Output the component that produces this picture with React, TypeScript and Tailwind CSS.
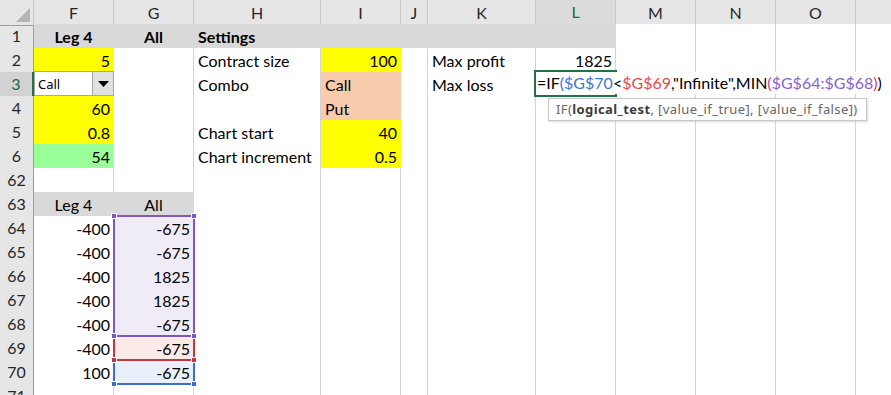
import React from "react";

type CellSpec = {
  v?: string;
  a?: "l" | "r" | "c";
  b?: boolean;
  f?: string;
  dd?: boolean;
};

type Row = { n: string; sel?: boolean; cells: Record<string, CellSpec> };

const YEL = "bg-[#ffff00] border-[#ffff00]";
const PEACH = "bg-[#f8cbad] border-[#f8cbad]";
const GRN = "bg-[#99ff99] border-[#99ff99]";
const GRY = "bg-[#d9d9d9] border-[#d9d9d9]";
const PUR = "bg-[#efebf7] border-[#d4d4d4]";
const RED = "bg-[#fbeaea] border-[#d4d4d4]";
const BLU = "bg-[#e9f0fa] border-[#d4d4d4]";

const COLS = ["F", "G", "H", "I", "J", "K", "L", "M", "N", "O", "P"];

const rows: Row[] = [
  {
    n: "1",
    cells: {
      F: { v: "Leg 4", a: "c", b: true, f: GRY },
      G: { v: "All", a: "c", b: true, f: GRY },
      H: { v: "Settings", b: true, f: GRY },
      I: { f: GRY },
      J: { f: GRY },
      K: { f: GRY },
      L: { f: GRY },
    },
  },
  {
    n: "2",
    cells: {
      F: { v: "5", a: "r", f: YEL },
      H: { v: "Contract size" },
      I: { v: "100", a: "r", f: YEL },
      K: { v: "Max profit" },
      L: { v: "1825", a: "r" },
    },
  },
  {
    n: "3",
    sel: true,
    cells: {
      F: { dd: true },
      H: { v: "Combo" },
      I: { v: "Call", f: PEACH },
      K: { v: "Max loss" },
    },
  },
  { n: "4", cells: { F: { v: "60", a: "r", f: YEL }, I: { v: "Put", f: PEACH } } },
  {
    n: "5",
    cells: {
      F: { v: "0.8", a: "r", f: YEL },
      H: { v: "Chart start" },
      I: { v: "40", a: "r", f: YEL },
    },
  },
  {
    n: "6",
    cells: {
      F: { v: "54", a: "r", f: GRN },
      H: { v: "Chart increment" },
      I: { v: "0.5", a: "r", f: YEL },
    },
  },
  { n: "62", cells: {} },
  {
    n: "63",
    cells: {
      F: { v: "Leg 4", a: "c", f: GRY },
      G: { v: "All", a: "c", f: GRY },
    },
  },
  { n: "64", cells: { F: { v: "-400", a: "r" }, G: { v: "-675", a: "r", f: PUR } } },
  { n: "65", cells: { F: { v: "-400", a: "r" }, G: { v: "-675", a: "r", f: PUR } } },
  { n: "66", cells: { F: { v: "-400", a: "r" }, G: { v: "1825", a: "r", f: PUR } } },
  { n: "67", cells: { F: { v: "-400", a: "r" }, G: { v: "1825", a: "r", f: PUR } } },
  { n: "68", cells: { F: { v: "-400", a: "r" }, G: { v: "-675", a: "r", f: PUR } } },
  { n: "69", cells: { F: { v: "-400", a: "r" }, G: { v: "-675", a: "r", f: RED } } },
  { n: "70", cells: { F: { v: "100", a: "r" }, G: { v: "-675", a: "r", f: BLU } } },
  { n: "71", cells: {} },
];

const GRID =
  "grid grid-cols-[34px_80px_80px_127px_80px_27px_108px_80px_80px_80px_80px_80px] h-6";

function Dropdown() {
  return (
    <div className="absolute -top-px left-0 -right-px bottom-0 flex border border-[#a6a6a6] bg-white">
      <div className="flex-1 flex items-center pl-[3px] text-[13px] text-black font-['Noto_Sans',sans-serif]">
        Call
      </div>
      <div className="w-[21px] flex items-center justify-center bg-[#e1e1e1] border-l border-[#a6a6a6]">
        <svg width="11" height="6" viewBox="0 0 11 6">
          <path d="M0 0h11L5.5 6z" fill="#000" />
        </svg>
      </div>
    </div>
  );
}

function Cell({ spec }: { spec?: CellSpec }) {
  const s = spec || {};
  const align =
    s.a === "r" ? "justify-end pr-[3px]" : s.a === "c" ? "justify-center" : "justify-start pl-[4px]";
  return (
    <div
      className={`relative flex items-end pb-[1px] border-r border-b whitespace-nowrap leading-[20px] text-[16px] text-black ${
        s.f ? s.f : "border-[#d4d4d4] bg-white"
      } ${align} ${s.b ? "font-bold" : ""}`}
    >
      {s.dd ? <Dropdown /> : s.v}
    </div>
  );
}

function Handle({ className }: { className: string }) {
  return <div className={`absolute w-[6px] h-[6px] border border-white ${className}`} />;
}

export default function App() {
  return (
    <div className="relative w-[891px] h-[395px] overflow-hidden bg-white font-['Lato',sans-serif]">
      {/* column headers */}
      <div className={GRID}>
        <div className="relative bg-[#e6e6e6] border-r border-b border-r-[#c8c8c8] border-b-[#9e9e9e]">
          <svg className="absolute right-[3px] bottom-[3px]" width="14" height="14" viewBox="0 0 14 14">
            <path d="M14 0V14H0z" fill="#b4b4b4" />
          </svg>
        </div>
        {COLS.map((c) => (
          <div
            key={c}
            className={`flex items-center justify-center text-[16px] border-r ${
              c === "L"
                ? "bg-[#dcdcdc] text-[#1d6b40] border-b-2 border-b-[#217346] border-r-[#c8c8c8]"
                : "bg-[#e6e6e6] text-[#262626] border-b border-b-[#9e9e9e] border-r-[#c8c8c8]"
            }`}
          >
            {c === "P" ? "" : c}
          </div>
        ))}
      </div>

      {rows.map((r) => (
        <div key={r.n} className={GRID}>
          <div
            className={`flex items-center justify-center text-[16px] border-b border-b-[#c8c8c8] ${
              r.sel
                ? "bg-[#d2d2d2] text-[#1d6b40] border-r-2 border-r-[#217346]"
                : "bg-[#e6e6e6] text-[#262626] border-r border-r-[#9e9e9e]"
            }`}
          >
            {r.n}
          </div>
          {COLS.map((c) => (
            <Cell key={c} spec={r.cells[c]} />
          ))}
        </div>
      ))}

      {/* active cell in edit mode */}
      <div className="absolute left-[534px] top-[70px] w-[83px] h-[27px] border-2 border-[#217346]" />
      <div className="absolute left-[537px] top-[72px] w-[354px] h-[22px] bg-white flex items-end pb-[1px] text-[16px] leading-[20px] whitespace-nowrap text-black">
        <span>=IF</span>
        <span className="text-[#3b78d4]">(</span>
        <span className="text-[#3b78d4]">$G$70</span>
        <span>&lt;</span>
        <span className="text-[#dd4b4b]">$G$69</span>
        <span>,"Infinite",MIN</span>
        <span className="text-[#cf3f78]">(</span>
        <span className="text-[#8a62cc]">$G$64:$G$68</span>
        <span className="text-[#cf3f78]">)</span>
        <span>)</span>
      </div>

      {/* function tooltip */}
      <div className="absolute left-[548px] top-[98px] w-[319px] h-[23px] bg-white border border-[#c6c6c6] shadow-[1px_1px_2px_rgba(0,0,0,0.15)] flex items-center pl-[7px] text-[13px] tracking-[0.4px] text-[#666666] whitespace-nowrap font-['Noto_Sans',sans-serif]">
        IF(<span className="font-bold text-[#3c3c3c]">logical_test</span>, [value_if_true], [value_if_false])
      </div>

      {/* range highlights */}
      <div className="absolute left-[113px] top-[215px] w-[82px] h-[122px] border-2 border-[#8057c2]" />
      <div className="absolute left-[113px] top-[335px] w-[82px] h-[26px] border-x-2 border-b-2 border-[#c0393f]" />
      <div className="absolute left-[113px] top-[359px] w-[82px] h-[26px] border-x-2 border-b-2 border-[#3a6fc6]" />
      <Handle className="left-[111px] top-[213px] bg-[#8057c2]" />
      <Handle className="left-[191px] top-[213px] bg-[#8057c2]" />
      <Handle className="left-[111px] top-[333px] bg-[#8057c2]" />
      <Handle className="left-[191px] top-[333px] bg-[#8057c2]" />
      <Handle className="left-[111px] top-[357px] bg-[#c0393f]" />
      <Handle className="left-[191px] top-[357px] bg-[#c0393f]" />
      <Handle className="left-[111px] top-[381px] bg-[#3a6fc6]" />
      <Handle className="left-[191px] top-[381px] bg-[#3a6fc6]" />
    </div>
  );
}
